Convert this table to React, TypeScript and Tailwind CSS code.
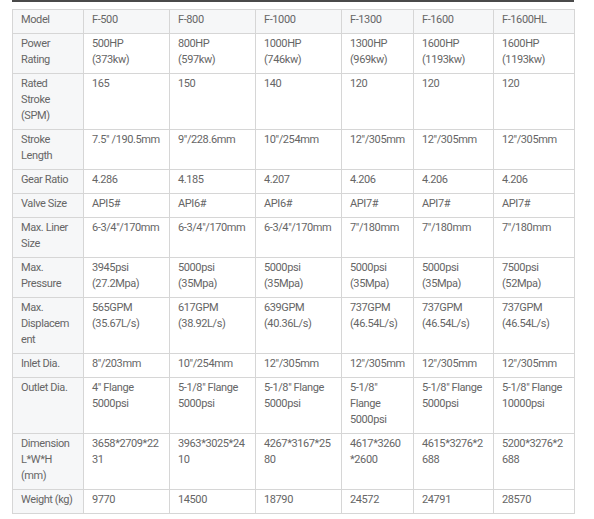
import React from "react";

const rows: string[][][] = [
  [["Model"], ["F-500"], ["F-800"], ["F-1000"], ["F-1300"], ["F-1600"], ["F-1600HL"]],
  [["Power", "Rating"], ["500HP", "(373kw)"], ["800HP", "(597kw)"], ["1000HP", "(746kw)"], ["1300HP", "(969kw)"], ["1600HP", "(1193kw)"], ["1600HP", "(1193kw)"]],
  [["Rated", "Stroke", "(SPM)"], ["165"], ["150"], ["140"], ["120"], ["120"], ["120"]],
  [["Stroke", "Length"], ['7.5" /190.5mm'], ['9"/228.6mm'], ['10"/254mm'], ['12"/305mm'], ['12"/305mm'], ['12"/305mm']],
  [["Gear Ratio"], ["4.286"], ["4.185"], ["4.207"], ["4.206"], ["4.206"], ["4.206"]],
  [["Valve Size"], ["API5#"], ["API6#"], ["API6#"], ["API7#"], ["API7#"], ["API7#"]],
  [["Max. Liner", "Size"], ['6-3/4"/170mm'], ['6-3/4"/170mm'], ['6-3/4"/170mm'], ['7"/180mm'], ['7"/180mm'], ['7"/180mm']],
  [["Max.", "Pressure"], ["3945psi", "(27.2Mpa)"], ["5000psi", "(35Mpa)"], ["5000psi", "(35Mpa)"], ["5000psi", "(35Mpa)"], ["5000psi", "(35Mpa)"], ["7500psi", "(52Mpa)"]],
  [["Max.", "Displacem", "ent"], ["565GPM", "(35.67L/s)"], ["617GPM", "(38.92L/s)"], ["639GPM", "(40.36L/s)"], ["737GPM", "(46.54L/s)"], ["737GPM", "(46.54L/s)"], ["737GPM", "(46.54L/s)"]],
  [["Inlet Dia."], ['8"/203mm'], ['10"/254mm'], ['12"/305mm'], ['12"/305mm'], ['12"/305mm'], ['12"/305mm']],
  [["Outlet Dia."], ['4" Flange', "5000psi"], ['5-1/8" Flange', "5000psi"], ['5-1/8" Flange', "5000psi"], ['5-1/8"', "Flange", "5000psi"], ['5-1/8" Flange', "5000psi"], ['5-1/8" Flange', "10000psi"]],
  [["Dimension", "L*W*H", "(mm)"], ["3658*2709*22", "31"], ["3963*3025*24", "10"], ["4267*3167*25", "80"], ["4617*3260", "*2600"], ["4615*3276*2", "688"], ["5200*3276*2", "688"]],
  [["Weight (kg)"], ["9770"], ["14500"], ["18790"], ["24572"], ["24791"], ["28570"]],
];

const widths = [71, 86, 86, 86, 72, 80, 81];

export default function App() {
  return (
    <div className="w-[594px] h-[519px] bg-white overflow-hidden" style={{ fontFamily: "Roboto, 'Liberation Sans', sans-serif" }}>
      <div className="ml-[12px] w-[562px] h-[2px] bg-[#4a4a4a]" />
      <table className="ml-[12px] mt-[7px] w-[563px] table-fixed border-collapse text-[11px] leading-4 tracking-[-0.4px] text-[#666666]">
        <colgroup>
          {widths.map((w, i) => (
            <col key={i} style={{ width: w }} />
          ))}
        </colgroup>
        <tbody>
          {rows.map((row, ri) => (
            <tr key={ri} className={ri === 0 ? "bg-[#f6f7f8]" : ""}>
              {row.map((cell, ci) => (
                <td
                  key={ci}
                  className={`border border-[#d6d6d6] pl-2 pr-1 pt-[2px] pb-[5px] align-top whitespace-nowrap overflow-hidden ${ci === 0 ? "bg-[#f6f7f8]" : ""}`}
                >
                  {cell.map((line, li) => (
                    <div key={li}>{line}</div>
                  ))}
                </td>
              ))}
            </tr>
          ))}
        </tbody>
      </table>
    </div>
  );
}
